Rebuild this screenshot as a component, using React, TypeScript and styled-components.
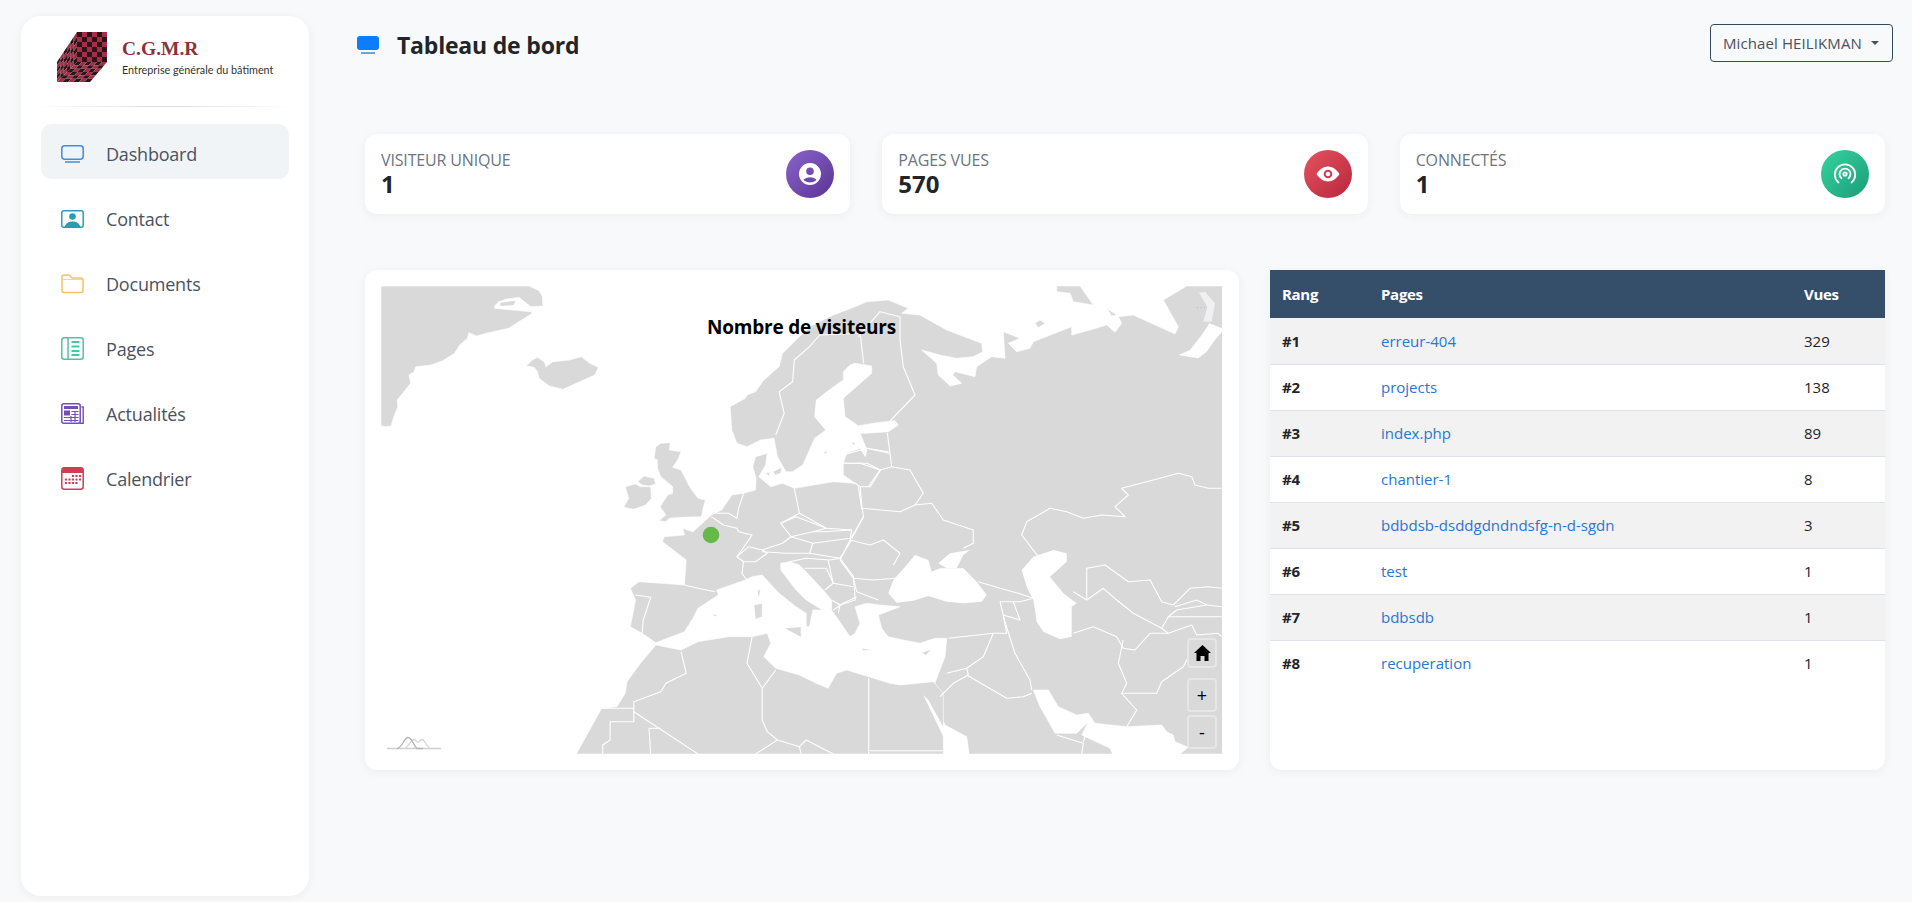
import styled, { createGlobalStyle } from 'styled-components'

const GlobalStyle = createGlobalStyle`
  html, body {
    margin: 0;
    padding: 0;
    background: #f8f9fa;
    font-family: 'Open Sans', 'Noto Sans', sans-serif;
  }
  * {
    box-sizing: border-box;
  }
`

const Page = styled.div`
  display: flex;
  width: 1912px;
  height: 902px;
  overflow: hidden;
  background: #f8f9fa;
`

const Sidebar = styled.aside`
  flex: none;
  width: 288px;
  height: 880px;
  margin: 16px 0 0 21px;
  padding: 16px 20px 0;
  background: #fff;
  border-radius: 20px;
  box-shadow: 0 2px 10px rgba(30, 50, 80, 0.06);
`

const Brand = styled.div`
  display: flex;
  align-items: center;
  gap: 15px;
  height: 50px;
  padding-left: 16px;
`

const BrandName = styled.div`
  font-family: 'Liberation Serif', serif;
  font-size: 19.5px;
  font-weight: 700;
  line-height: 24px;
  color: #8e2f3c;
`

const BrandTagline = styled.div`
  margin-top: 2px;
  font-family: 'Lato', sans-serif;
  font-size: 10.8px;
  line-height: 14px;
  color: #333;
`

const Divider = styled.div`
  height: 1px;
  margin: 24px -3px 17px;
  background: linear-gradient(90deg, rgba(210, 214, 220, 0), #d8dbe0 50%, rgba(210, 214, 220, 0));
`

const Nav = styled.nav`
  display: flex;
  flex-direction: column;
  gap: 10px;
`

const NavItem = styled.a<{ $active?: boolean }>`
  display: flex;
  align-items: center;
  gap: 22px;
  height: 55px;
  padding: 4px 0 0 20px;
  border-radius: 10px;
  font-size: 18px;
  letter-spacing: -0.2px;
  color: #4a5260;
  background: ${(p) => (p.$active ? '#f1f4f7' : 'transparent')};
`

const Main = styled.main`
  flex: 1;
  min-width: 0;
  padding: 24px 19px 0 48px;
`

const TopBar = styled.header`
  display: flex;
  align-items: center;
  justify-content: space-between;
  height: 38px;
`

const Title = styled.h1`
  display: flex;
  align-items: center;
  gap: 18px;
  margin: 4px 0 0;
  font-size: 23px;
  font-weight: 700;
  letter-spacing: -0.2px;
  color: #212529;
`

const UserButton = styled.button`
  display: flex;
  align-items: center;
  gap: 9px;
  height: 38px;
  width: 183px;
  padding: 0 12px;
  background: transparent;
  border: 1px solid #34495e;
  border-radius: 4px;
  font-family: inherit;
  font-size: 15px;
  letter-spacing: 0.1px;
  white-space: nowrap;
  color: #4a5260;
`

const Caret = styled.span`
  width: 0;
  height: 0;
  border-top: 4.5px solid #4a5260;
  border-left: 4.5px solid transparent;
  border-right: 4.5px solid transparent;
`

const Content = styled.div`
  margin: 72px 8px 0 8px;
`

const Stats = styled.section`
  display: grid;
  grid-template-columns: repeat(3, 1fr);
  gap: 32px;
`

const StatCard = styled.div`
  display: flex;
  align-items: center;
  justify-content: space-between;
  height: 80px;
  padding: 0 16px;
  background: #fff;
  border-radius: 12px;
  box-shadow: 0 2px 10px rgba(30, 50, 80, 0.06);
`

const StatLabel = styled.div`
  font-size: 16px;
  line-height: 20px;
  letter-spacing: -0.15px;
  color: #6c757d;
`

const StatValue = styled.div`
  font-size: 24px;
  font-weight: 700;
  line-height: 28px;
  color: #212529;
`

const StatIcon = styled.div<{ $from: string; $to: string }>`
  display: flex;
  align-items: center;
  justify-content: center;
  width: 48px;
  height: 48px;
  border-radius: 50%;
  background: linear-gradient(135deg, ${(p) => p.$from}, ${(p) => p.$to});
`

const Panels = styled.section`
  display: grid;
  grid-template-columns: 874px 615px;
  justify-content: space-between;
  margin-top: 56px;
`

const MapCard = styled.div`
  position: relative;
  height: 500px;
  padding: 16px;
  background: #fff;
  border-radius: 12px;
  box-shadow: 0 2px 10px rgba(30, 50, 80, 0.06);
`

const MapCanvas = styled.svg`
  display: block;
  width: 841px;
  height: 468px;
`

const MapTitle = styled.div`
  position: absolute;
  top: 44px;
  left: 342px;
  font-size: 19px;
  font-weight: 700;
  letter-spacing: -0.2px;
  color: #000;
`

const MapControls = styled.div`
  position: absolute;
  top: 368px;
  left: 822px;
  display: flex;
  flex-direction: column;
  gap: 3px;
`

const MapButton = styled.div<{ $tall?: boolean }>`
  display: flex;
  align-items: center;
  justify-content: center;
  width: 30px;
  height: ${(p) => (p.$tall ? '34px' : '30px')};
  background: #d9d9d9;
  border: 2px solid #e6e6e6;
  border-radius: 4px;
  font-size: 18px;
  color: #000;
`

const HomeGap = styled.div`
  height: 4px;
`

const TableCard = styled.div`
  height: 500px;
  background: #fff;
  border-radius: 0 0 12px 12px;
  box-shadow: 0 2px 10px rgba(30, 50, 80, 0.06);
`

const Table = styled.table`
  width: 100%;
  table-layout: fixed;
  border-collapse: collapse;
  font-size: 15px;
`

const HeadRow = styled.tr`
  height: 48px;
  background: #354f6b;
`

const HeadCell = styled.th<{ $w?: number }>`
  width: ${(p) => (p.$w ? `${p.$w}px` : 'auto')};
  padding: 0 12px;
  text-align: left;
  font-weight: 700;
  letter-spacing: -0.3px;
  color: #fff;
`

const Row = styled.tr`
  height: 46px;
  border-bottom: 1px solid #dee2e6;
  &:nth-child(odd) {
    background: #f2f2f2;
  }
  &:last-child {
    border-bottom: 0;
  }
`

const Cell = styled.td<{ $bold?: boolean }>`
  padding: 0 12px;
  font-weight: ${(p) => (p.$bold ? 700 : 400)};
  letter-spacing: ${(p) => (p.$bold ? '-0.3px' : '0')};
  color: #212529;
`

const PageLink = styled.a`
  color: #2a76d2;
`

const navItems = [
  { label: 'Dashboard', icon: <TvIcon />, active: true },
  { label: 'Contact', icon: <ContactIcon /> },
  { label: 'Documents', icon: <FolderIcon /> },
  { label: 'Pages', icon: <PagesIcon /> },
  { label: 'Actualités', icon: <NewsIcon /> },
  { label: 'Calendrier', icon: <CalendarIcon /> },
]

const pageRows = [
  ['#1', 'erreur-404', '329'],
  ['#2', 'projects', '138'],
  ['#3', 'index.php', '89'],
  ['#4', 'chantier-1', '8'],
  ['#5', 'bdbdsb-dsddgdndndsfg-n-d-sgdn', '3'],
  ['#6', 'test', '1'],
  ['#7', 'bdbsdb', '1'],
  ['#8', 'recuperation', '1'],
]

function TvIcon() {
  return (
    <svg width="23" height="18" viewBox="0 0 23 18" fill="none" stroke="#3f8fe0" strokeWidth="1.5">
      <rect x="0.8" y="0.8" width="21.4" height="13.4" rx="3" />
      <path d="M4 17h15" />
    </svg>
  )
}

function ContactIcon() {
  return (
    <svg width="23" height="18" viewBox="0 0 23 18" fill="none">
      <rect x="0.8" y="0.8" width="21.4" height="16.4" rx="2" stroke="#2a9db3" strokeWidth="1.5" />
      <circle cx="11.5" cy="6.5" r="3.3" fill="#2a9db3" />
      <path d="M3.5 17.5c.8-4 3.8-6 8-6s7.2 2 8 6z" fill="#2a9db3" />
    </svg>
  )
}

function FolderIcon() {
  return (
    <svg width="23" height="20" viewBox="0 0 23 20" fill="none" stroke="#f5c45e" strokeWidth="1.5">
      <path d="M1 16.5V3a2 2 0 0 1 2-2h4.5c1 0 1.4.4 2 1.2l.8 1c.4.5.8.8 1.6.8H20a2 2 0 0 1 2 2v10.5a2 2 0 0 1-2 2H3a2 2 0 0 1-2-2z" />
      <path d="M1 5.5h21" strokeWidth="1" opacity="0.7" />
    </svg>
  )
}

function PagesIcon() {
  return (
    <svg width="23" height="23" viewBox="0 0 23 23" fill="none" stroke="#4fc59d">
      <rect x="0.8" y="0.8" width="21.4" height="21.4" rx="2.5" strokeWidth="1.5" />
      <path d="M7 1v21" strokeWidth="1.5" />
      <path d="M10.5 5h8M10.5 9.5h8M10.5 14h8M10.5 18h8" strokeWidth="1.8" />
    </svg>
  )
}

function NewsIcon() {
  return (
    <svg width="23" height="21" viewBox="0 0 23 21" fill="none">
      <rect x="0.8" y="0.8" width="18.4" height="19.4" rx="2" stroke="#7450b5" strokeWidth="1.5" />
      <path d="M20.5 4h1.7v16.2h-4" stroke="#7450b5" strokeWidth="1.4" />
      <rect x="3" y="3" width="14" height="3" fill="#7450b5" />
      <rect x="3" y="7.5" width="6" height="5" fill="#7450b5" />
      <path d="M10.5 8.5h7M10.5 11.5h7M3 14.5h14.5M3 17.5h14.5M10 13v6M14 8v11" stroke="#7450b5" strokeWidth="1.2" />
    </svg>
  )
}

function CalendarIcon() {
  const dots = [
    [12, 9], [15.5, 9], [19, 9],
    [5, 12.5], [8.5, 12.5], [12, 12.5], [15.5, 12.5], [19, 12.5],
    [5, 16], [8.5, 16], [12, 16], [15.5, 16],
  ]
  return (
    <svg width="23" height="23" viewBox="0 0 23 23" fill="none">
      <rect x="0.8" y="0.8" width="21.4" height="21.4" rx="2.5" stroke="#cf3f52" strokeWidth="1.5" />
      <path d="M1 3a2 2 0 0 1 2-2h17a2 2 0 0 1 2 2v3H1z" fill="#cf3f52" />
      {dots.map(([x, y]) => (
        <rect key={`${x}-${y}`} x={x - 1.1} y={y - 1.1} width="2.2" height="2.2" rx="0.5" fill="#cf3f52" />
      ))}
    </svg>
  )
}

function CubeLogo() {
  // trois faces en damier, une cellule = un quad interpolé
  const faces = [
    [[20, 0], [50, 0], [50, 30], [20, 30]],
    [[0, 30], [20, 0], [20, 30], [0, 50]],
    [[20, 30], [50, 30], [33, 50], [0, 50]],
  ]
  const at = (f: number[][], u: number, v: number) => {
    const x = (1 - v) * ((1 - u) * f[0][0] + u * f[1][0]) + v * ((1 - u) * f[3][0] + u * f[2][0])
    const y = (1 - v) * ((1 - u) * f[0][1] + u * f[1][1]) + v * ((1 - u) * f[3][1] + u * f[2][1])
    return `${x},${y}`
  }
  const cells: { key: string; points: string; dark: boolean }[] = []
  faces.forEach((f, n) => {
    for (let i = 0; i < 6; i++) {
      for (let j = 0; j < 6; j++) {
        cells.push({
          key: `${n}-${i}-${j}`,
          dark: (i + j) % 2 === 0,
          points: [at(f, i / 6, j / 6), at(f, (i + 1) / 6, j / 6), at(f, (i + 1) / 6, (j + 1) / 6), at(f, i / 6, (j + 1) / 6)].join(' '),
        })
      }
    }
  })
  return (
    <svg width="50" height="50" viewBox="0 0 50 50">
      {cells.map((c) => (
        <polygon key={c.key} points={c.points} fill={c.dark ? '#2b1518' : '#a62d47'} />
      ))}
    </svg>
  )
}

// Coordonnées relevées sur la carte : W et E sont deux repères du tracé
const toPoints = (c: number[], fx: (x: number) => number) => {
  const out: string[] = []
  for (let i = 0; i < c.length; i += 2) {
    out.push(`${fx(c[i]).toFixed(1)},${(c[i + 1] / 3 - 26).toFixed(1)}`)
  }
  return out.join(' ')
}
const W = (...c: number[]) => toPoints(c, (x) => x * 0.338 - 21)
const E = (...c: number[]) => toPoints(c, (x) => x / 3 + 419)

const land = [
  // Eurasie
  [
    W(1040, 765, 1070, 750, 1100, 705, 1135, 700, 1170, 690, 1172, 655, 1162, 620, 1170, 590, 1205, 580, 1200, 615, 1180, 650, 1215, 680, 1250, 670, 1285, 685, 1400, 665, 1465, 670, 1430, 645, 1430, 610, 1440, 580, 1480, 565, 1495, 590, 1500, 570, 1480, 520),
    E(200, 520, 265, 515, 295, 495, 285, 482, 230, 488, 175, 497, 135, 470, 130, 415, 215, 340, 215, 318, 165, 310),
    W(1450, 315, 1430, 335, 1430, 360, 1395, 385, 1350, 420, 1345, 470, 1378, 510, 1345, 535, 1330, 570, 1310, 615, 1280, 635, 1260, 635, 1235, 590, 1225, 535, 1185, 540, 1145, 560, 1115, 550, 1100, 510, 1095, 440, 1140, 415, 1145, 405, 1170, 395, 1195, 360, 1240, 320, 1250, 280, 1300, 230, 1340, 195, 1400, 165, 1440, 150, 1500, 125),
    E(265, 120, 325, 145, 305, 160, 360, 165, 440, 210, 545, 250, 548, 275, 520, 290, 470, 295, 420, 285, 365, 270, 410, 310, 415, 345, 450, 378, 485, 370, 458, 345, 465, 335, 525, 350, 530, 320, 575, 290, 615, 295, 610, 215, 660, 235, 625, 250, 650, 275, 690, 265, 700, 245, 815, 200, 815, 225, 870, 210, 920, 195, 945, 217, 965, 190, 955, 170, 1000, 165, 1125, 222, 1135, 200, 1090, 120, 1160, 78, 1300, 78, 1300, 1482, 1140, 1482, 1165, 1462, 1125, 1445, 1120, 1425, 1100, 1415, 1085, 1395, 980, 1400, 885, 1390, 865, 1360, 830, 1365, 775, 1340, 745, 1290, 700, 1290, 720, 1340, 740, 1375, 765, 1420, 830, 1420, 865, 1385, 845, 1425, 930, 1465, 938, 1482, 507, 1482, 500, 1430, 435, 1395, 410, 1340, 405, 1268, 435, 1190, 440, 1135, 405, 1135, 360, 1150, 310, 1140, 265, 1130, 245, 1105, 235, 1065, 300, 1040, 240, 1035, 200, 1030, 165, 1040, 180, 1090, 165, 1120, 150, 1130, 130, 1100),
    W(1395, 1050, 1395, 1020, 1370, 990, 1315, 930, 1300, 915, 1270, 905, 1245, 910, 1245, 930, 1290, 990, 1320, 1020, 1368, 1050, 1340, 1050, 1330, 1100, 1320, 1100, 1320, 1060, 1290, 1040, 1240, 1000, 1190, 945, 1160, 950, 1140, 960, 1055, 990, 1060, 1005, 1000, 1045, 985, 1075, 960, 1115, 875, 1148, 835, 1120, 800, 1100, 815, 1020, 800, 985, 825, 965, 960, 975, 965, 900, 895, 845, 900, 830, 960, 825, 955, 805, 985, 815),
  ].join(' '),
  // Afrique du Nord
  [
    W(640, 1482, 715, 1345, 760, 1340, 785, 1300, 790, 1265, 830, 1210, 875, 1155, 950, 1170, 1000, 1145, 1090, 1130, 1160, 1130, 1205, 1120, 1215, 1150, 1195, 1190, 1230, 1225, 1300, 1245, 1350, 1270, 1385, 1285, 1410, 1240, 1440, 1230, 1505, 1250),
    E(270, 1270, 300, 1275, 400, 1265, 430, 1300, 430, 1482),
  ].join(' '),
  // Groenland
  W(62, 78, 500, 78, 530, 92, 540, 110, 541, 138, 505, 140, 470, 112, 430, 118, 400, 135, 398, 145, 505, 155, 510, 160, 470, 185, 440, 205, 380, 218, 345, 228, 322, 218, 318, 235, 295, 255, 280, 280, 245, 302, 210, 315, 165, 320, 160, 335, 145, 345, 150, 370, 130, 395, 110, 420, 112, 440, 100, 470, 92, 498, 75, 500, 62, 497),
  W(415, 128, 460, 122, 455, 135, 415, 138),
  // Islande
  W(492, 318, 510, 300, 525, 292, 545, 305, 550, 320, 570, 305, 620, 300, 655, 290, 680, 310, 705, 322, 695, 345, 650, 365, 600, 388, 560, 378, 530, 355, 525, 335, 515, 322),
  // Irlande, Ulster, Grande-Bretagne
  W(785, 680, 815, 672, 830, 680, 860, 680, 862, 715, 845, 735, 810, 748, 780, 742, 795, 715),
  W(822, 665, 840, 648, 870, 655, 875, 672, 855, 678, 835, 675),
  W(875, 560, 890, 550, 918, 548, 915, 570, 950, 575, 940, 600, 925, 622, 950, 630, 975, 680, 1000, 715, 1022, 720, 1015, 745, 1010, 770, 950, 772, 915, 775, 905, 785, 885, 782, 905, 765, 888, 740, 910, 705, 925, 700, 925, 680, 890, 650, 880, 625, 880, 600, 870, 595),
  // Iles
  W(1255, 1105, 1305, 1100, 1305, 1132),
  W(1165, 1035, 1190, 1030, 1190, 1070, 1170, 1078),
  W(1175, 990, 1185, 990, 1180, 1018),
  W(1042, 1062, 1058, 1066, 1050, 1070),
  W(1200, 640, 1212, 636, 1210, 648),
  W(1222, 635, 1248, 622, 1245, 640, 1228, 645),
  W(1372, 578, 1382, 570, 1378, 584),
  W(1452, 550, 1465, 546, 1462, 556),
  E(185, 1165, 220, 1170, 190, 1172),
  E(365, 1178, 395, 1168, 378, 1186),
  E(770, 78, 840, 78, 880, 135, 820, 125, 810, 100, 770, 95),
  E(920, 145, 950, 165, 935, 168),
  E(705, 190, 720, 180, 735, 190, 715, 203),
]

const seas = [
  E(265, 1000, 280, 960, 320, 915, 345, 885, 385, 900, 395, 935, 420, 925, 490, 925, 530, 965, 560, 1005, 545, 1025, 490, 1030, 440, 1025, 385, 1008, 340, 1022, 290, 1028),
  E(415, 910, 450, 880, 510, 870, 490, 885, 470, 925, 440, 925),
  E(665, 930, 700, 890, 760, 870, 800, 880, 800, 905, 750, 950, 790, 1000, 830, 1030, 815, 1040, 815, 1130, 780, 1138, 730, 1115, 710, 1085, 700, 1020, 680, 980),
  E(370, 1305, 385, 1320, 430, 1400, 500, 1430, 507, 1482, 460, 1482, 430, 1430),
  E(1135, 285, 1170, 270, 1205, 225, 1228, 190, 1266, 205, 1266, 215, 1245, 240, 1220, 275, 1195, 295, 1165, 290),
]

const borders = [
  W(815, 1005, 860, 1012, 848, 1050, 838, 1080, 835, 1120),
  W(960, 975, 1000, 985, 1050, 995),
  W(1040, 770, 1075, 795, 1115, 805, 1120, 815, 1160, 825, 1140, 855, 1115, 890, 1135, 905, 1130, 940, 1145, 960),
  W(1045, 760, 1090, 760, 1115, 775, 1120, 745, 1135, 700),
  W(1285, 685, 1300, 760, 1245, 790, 1275, 830, 1250, 850, 1190, 870, 1150, 860, 1115, 890),
  W(1190, 870, 1205, 880, 1170, 905, 1135, 905),
  W(1190, 875, 1260, 880, 1330, 880, 1340, 850, 1275, 830),
  W(1245, 790, 1290, 770, 1380, 805, 1340, 815, 1275, 830),
  W(1340, 815, 1370, 815, 1455, 810, 1450, 835, 1340, 850),
  W(1300, 760, 1380, 805, 1455, 810),
  W(1465, 670, 1480, 680, 1485, 740, 1490, 770, 1455, 835),
  W(1330, 880, 1420, 895, 1455, 840),
  W(1270, 905, 1320, 895, 1390, 900, 1420, 895),
  W(1315, 925, 1380, 925, 1400, 970, 1375, 990),
  W(1385, 900, 1400, 970, 1460, 980),
  W(1420, 895, 1460, 950, 1465, 1020, 1420, 1035, 1395, 1020),
  W(1420, 1035, 1415, 1060),
  W(1230, 525, 1255, 460, 1240, 395, 1280, 365, 1285, 300, 1330, 260, 1360, 225, 1480, 220, 1490, 310),
  W(1430, 610, 1500, 610, 1540, 630, 1510, 680, 1480, 680),
  W(1480, 560, 1565, 580),
  W(1410, 655, 1465, 670),
  E(175, 230, 240, 155, 300, 170, 300, 240, 310, 320, 345, 405, 270, 483),
  E(262, 518, 275, 620, 240, 630, 205, 680),
  E(130, 585, 200, 565, 265, 575),
  E(130, 610, 180, 610, 240, 630),
  E(275, 620, 330, 630, 370, 700, 345, 735),
  E(175, 680, 185, 745, 300, 755, 345, 735, 395, 730, 430, 780, 520, 810, 520, 850, 490, 865),
  E(190, 770, 150, 840, 210, 855, 250, 840, 300, 880, 280, 915),
  E(150, 840, 120, 900, 160, 955, 220, 960, 285, 955),
  E(160, 955, 170, 995, 235, 1020),
  E(100, 1050, 130, 1030, 170, 1010),
  E(715, 890, 665, 825, 680, 785, 750, 745, 800, 755, 850, 775, 905, 765, 975, 770, 945, 740, 985, 705, 965, 685, 1060, 660, 1135, 640, 1175, 650, 1185, 675, 1225, 685, 1265, 685),
  E(535, 965, 600, 985, 655, 1000, 700, 1015),
  E(600, 1025, 660, 1025, 700, 1015),
  E(600, 1025, 610, 1065, 660, 1080, 640, 1025),
  E(610, 1065, 620, 1120, 580, 1120, 445, 1135),
  E(610, 1070, 645, 1180, 690, 1260, 695, 1290),
  E(580, 1120, 550, 1190, 500, 1225),
  E(500, 1245, 620, 1315, 670, 1310, 695, 1300),
  E(440, 1240, 500, 1225, 505, 1245, 460, 1270, 420, 1310),
  E(820, 1120, 880, 1100, 950, 1130, 970, 1165),
  E(970, 1140, 955, 1210, 980, 1270, 965, 1300, 1010, 1350, 980, 1400),
  E(965, 1300, 1070, 1300, 1085, 1265, 1150, 1220, 1165, 1190),
  E(820, 995, 860, 1020, 860, 925, 915, 915, 985, 965, 1050, 960, 1085, 1025, 1120, 1035, 1170, 985, 1225, 980, 1265, 985),
  E(860, 1020, 910, 985, 950, 1020, 1000, 1060, 1085, 1105, 1105, 1120),
  E(1085, 1105, 1105, 1070, 1130, 1050, 1220, 1035),
  E(970, 1165, 1005, 1170, 1050, 1120, 1105, 1120, 1175, 1095, 1190, 1125, 1255, 1120, 1265, 1130),
  E(1125, 1040, 1190, 1020, 1220, 1035, 1265, 1040),
  E(1105, 1070, 1265, 1070),
  E(770, 1425, 850, 1450, 845, 1482),
  E(850, 1445, 870, 1390),
  W(950, 1175, 965, 1240, 905, 1270, 890, 1295, 810, 1325, 810, 1345),
  W(715, 1345, 810, 1345, 810, 1385, 740, 1385, 740, 1440, 718, 1455, 718, 1482),
  W(810, 1355, 1000, 1482),
  W(855, 1405, 890, 1405),
  W(855, 1405, 860, 1482),
  W(1160, 1130, 1145, 1210, 1190, 1285, 1230, 1230),
  W(1190, 1285, 1190, 1380, 1205, 1415, 1235, 1440, 1170, 1482),
  W(1235, 1440, 1300, 1460, 1320, 1440, 1400, 1482),
  W(1300, 1460, 1305, 1482),
  W(1505, 1255, 1505, 1482),
  E(210, 1472, 460, 1472),
]

function WorldMap() {
  return (
    <MapCanvas viewBox="0 0 841 468">
      {land.map((points, i) => (
        <polygon key={i} points={points} fill="#d9d9d9" stroke="#fff" strokeWidth="0.6" />
      ))}
      <polygon points={W(398, 140, 410, 124, 462, 116, 505, 150, 450, 146)} fill="#fff" />
      <polygon points={W(415, 128, 460, 122, 455, 135, 415, 138)} fill="#d9d9d9" />
      {seas.map((points, i) => (
        <polygon key={i} points={points} fill="#fff" />
      ))}
      {borders.map((points, i) => (
        <polyline key={i} points={points} fill="none" stroke="#fff" strokeWidth="1.1" strokeLinejoin="round" />
      ))}
      <polygon points={E(1197, 98, 1215, 95, 1245, 130, 1235, 185, 1210, 185, 1222, 140)} fill="#f0f0f0" />
      <circle cx="816.5" cy="21.5" r="0.7" fill="#b9c3e0" />
      <circle cx="820" cy="21.5" r="0.7" fill="#b9c3e0" />
      <circle cx="823.5" cy="21.5" r="0.7" fill="#b9c3e0" />
      <circle cx="330" cy="249" r="8.3" fill="#67b84b" />
      <g transform="translate(6 451)" fill="none" strokeWidth="1.3">
        <path d="M0 11.5h54" stroke="#cfcfcf" />
        <path d="M24 11.5c4-2 6-9 9-9 2 0 3 3 4 3s2-3 4-3c3 0 5 9 9 9" stroke="#d6d6d6" transform="translate(-6 0)" />
        <path d="M10 11.5c5 0 7-11 11-11s6 9 9 11h6" stroke="#b5b5b5" />
      </g>
    </MapCanvas>
  )
}

export default function App() {
  return (
    <Page>
      <GlobalStyle />
      <Sidebar>
        <Brand>
          <CubeLogo />
          <div>
            <BrandName>C.G.M.R</BrandName>
            <BrandTagline>Entreprise générale du bâtiment</BrandTagline>
          </div>
        </Brand>
        <Divider />
        <Nav>
          {navItems.map((item) => (
            <NavItem key={item.label} $active={item.active}>
              {item.icon}
              {item.label}
            </NavItem>
          ))}
        </Nav>
      </Sidebar>
      <Main>
        <TopBar>
          <Title>
            <svg width="22" height="18" viewBox="0 0 22 18" fill="#0d7dfd">
              <rect width="22" height="14" rx="3" />
              <rect x="4" y="16.4" width="14" height="1.3" />
            </svg>
            Tableau de bord
          </Title>
          <UserButton>
            Michael HEILIKMAN
            <Caret />
          </UserButton>
        </TopBar>
        <Content>
          <Stats>
            <StatCard>
              <div>
                <StatLabel>VISITEUR UNIQUE</StatLabel>
                <StatValue>1</StatValue>
              </div>
              <StatIcon $from="#8a63c9" $to="#5a3494">
                <svg width="24" height="24" viewBox="0 0 24 24" fill="#fff" fillRule="evenodd">
                  <path d="M12 1a11 11 0 1 0 0 22 11 11 0 0 0 0-22zm0 4.5a3.8 3.8 0 1 1 0 7.6 3.8 3.8 0 0 1 0-7.6zm0 9.7c2.6 0 5 .9 6.5 2.5-1.6 1.8-3.9 2.8-6.5 2.8s-4.9-1-6.5-2.8c1.5-1.6 3.9-2.5 6.5-2.5z" />
                </svg>
              </StatIcon>
            </StatCard>
            <StatCard>
              <div>
                <StatLabel>PAGES VUES</StatLabel>
                <StatValue>570</StatValue>
              </div>
              <StatIcon $from="#e4535f" $to="#b9263e">
                <svg width="24" height="24" viewBox="0 0 24 24" fill="#fff" fillRule="evenodd">
                  <path d="M12 4.5c5.5 0 9.5 4.2 11.5 7.5-2 3.3-6 7.5-11.5 7.5S2.500 15.300.5 12C2.500 8.700 6.500 4.500 12 4.500zm0 3.200a4.300 4.300 0 1 0 0 8.600 4.300 4.300 0 0 0 0-8.600zm0 2a2.300 2.300 0 1 1 0 4.600 2.300 2.300 0 0 1 0-4.600z" />
                </svg>
              </StatIcon>
            </StatCard>
            <StatCard>
              <div>
                <StatLabel>CONNECTÉS</StatLabel>
                <StatValue>1</StatValue>
              </div>
              <StatIcon $from="#36d4a0" $to="#1a9c77">
                <svg width="24" height="24" viewBox="0 0 24 24" fill="none" stroke="#fff" strokeWidth="1.8" strokeLinecap="round">
                  <path d="M5.5 20.500a10.200 10.200 0 1 1 13 0" />
                  <path d="M8.5 16.300a5.500 5.500 0 1 1 7 0" />
                  <circle cx="12" cy="12" r="1.7" />
                </svg>
              </StatIcon>
            </StatCard>
          </Stats>
          <Panels>
            <MapCard>
              <WorldMap />
              <MapTitle>Nombre de visiteurs</MapTitle>
              <MapControls>
                <MapButton>
                  <svg width="17" height="16" viewBox="0 0 17 16" fill="#000">
                    <path d="M8.5 0 0 8h2.500v8h4v-5h4v5h4V8H17z" />
                  </svg>
                </MapButton>
                <HomeGap />
                <MapButton $tall>+</MapButton>
                <MapButton $tall>-</MapButton>
              </MapControls>
            </MapCard>
            <TableCard>
              <Table>
                <thead>
                  <HeadRow>
                    <HeadCell $w={99}>Rang</HeadCell>
                    <HeadCell>Pages</HeadCell>
                    <HeadCell $w={93}>Vues</HeadCell>
                  </HeadRow>
                </thead>
                <tbody>
                  {pageRows.map(([rank, page, views]) => (
                    <Row key={rank}>
                      <Cell $bold>{rank}</Cell>
                      <Cell>
                        <PageLink>{page}</PageLink>
                      </Cell>
                      <Cell>{views}</Cell>
                    </Row>
                  ))}
                </tbody>
              </Table>
            </TableCard>
          </Panels>
        </Content>
      </Main>
    </Page>
  )
}
